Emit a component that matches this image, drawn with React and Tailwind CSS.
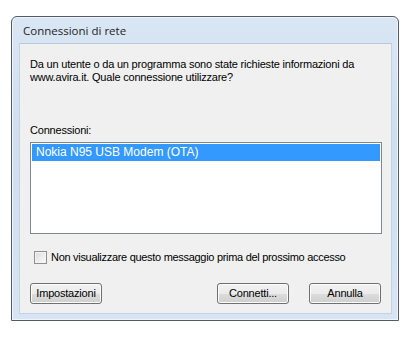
export default function App() {
  const btn =
    'w-[72px] h-[21px] rounded-[3px] border border-[#707070] bg-[linear-gradient(to_bottom,#f2f2f2_0%,#ebebeb_50%,#dddddd_50%,#cfcfcf_100%)] text-[11px] tracking-[-0.2px] text-black flex items-center justify-center shadow-[inset_0_0_0_1px_#fcfcfc]';

  return (
    <div className="w-[405px] h-[349px] bg-white overflow-hidden font-['Liberation_Sans',Arial,sans-serif]">
      {/* window frame */}
      <div className="ml-[11px] mt-[16px] w-[388px] h-[305px] border border-[#555b63] rounded-t-[6px] bg-[linear-gradient(to_bottom,#d9e6f4_0%,#cfdff0_40%,#d6e4f3_100%)] flex flex-col px-[7px] pb-[6px] pr-[6px] shadow-[inset_0_0_0_1px_#eef4fb]">
        <div className="h-[26px] flex items-center pl-[4px] pt-[2px] text-[11.5px] text-[#1e1e1e] font-['Open_Sans','Noto_Sans',sans-serif]">
          Connessioni di rete
        </div>

        {/* client area */}
        <div className="flex-1 bg-[#f0f0f0] border border-[#c4d3e4] border-t-[#b9c9dc] flex flex-col px-[10px] text-[11px] leading-[13px] tracking-[-0.2px] text-black">
          <p className="mt-[14px]">
            Da un utente o da un programma sono state richieste informazioni da
            <br />
            www.avira.it. Quale connessione utilizzare?
          </p>

          <div className="mt-[40px]">Connessioni:</div>

          <div className="mt-[5px] w-[352px] h-[92px] border border-[#828790] bg-white p-px">
            <div className="h-[17px] bg-[#3399ff] text-white pl-[4px] flex items-center text-[12px] tracking-normal">
              Nokia N95 USB Modem (OTA)
            </div>
          </div>

          <label className="mt-[17px] flex items-center gap-[4px] ml-[4px]">
            <span className="w-[13px] h-[13px] border border-[#8e8f8f] bg-[linear-gradient(135deg,#dcdcdc,#fbfbfb)] shadow-[inset_0_0_0_1px_#f4f4f4]" />
            <span className="tracking-[-0.3px]">Non visualizzare questo messaggio prima del prossimo accesso</span>
          </label>

          <div className="mt-[19px] flex items-center">
            <button className={btn}>Impostazioni</button>
            <div className="flex-1" />
            <button className={btn}>Connetti...</button>
            <button className={btn + ' ml-[20px]'}>Annulla</button>
          </div>
        </div>
      </div>
    </div>
  );
}
